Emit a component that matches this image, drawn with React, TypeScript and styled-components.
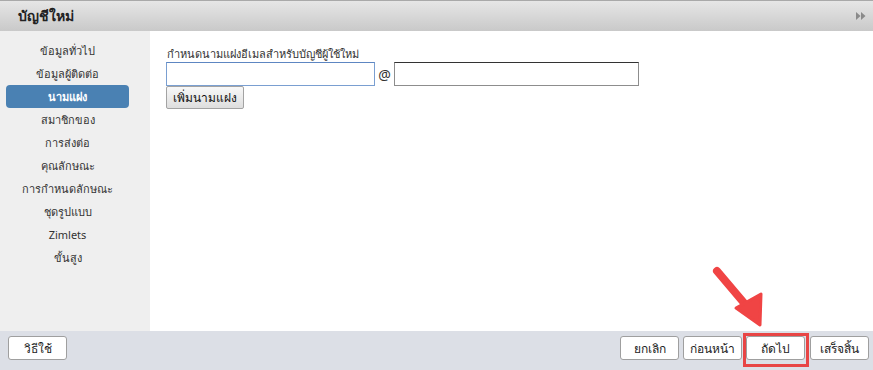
import React from "react";
import styled, { createGlobalStyle } from "styled-components";

const GlobalStyle = createGlobalStyle`
  html, body {
    margin: 0;
    padding: 0;
    background: #fff;
  }
  body {
    font-family: Tahoma, "Noto Sans", "DejaVu Sans", "Liberation Sans", sans-serif;
    font-size: 11px;
    color: #222;
  }
`;

const navItems = [
  "ข้อมูลทั่วไป",
  "ข้อมูลผู้ติดต่อ",
  "นามแฝง",
  "สมาชิกของ",
  "การส่งต่อ",
  "คุณลักษณะ",
  "การกำหนดลักษณะ",
  "ชุดรูปแบบ",
  "Zimlets",
  "ขั้นสูง",
];

export default function App() {
  const [active, setActive] = React.useState(2);

  return (
    <Dialog>
      <GlobalStyle />
      <TitleBar>
        <Title>บัญชีใหม่</Title>
        <svg width="10" height="8" viewBox="0 0 10 8">
          <path d="M0 0 L4.5 4 L0 8 Z M5 0 L9.5 4 L5 8 Z" fill="#8a8a8a" />
        </svg>
      </TitleBar>
      <Body>
        <Nav>
          {navItems.map((item, i) => (
            <NavItem key={item} $active={i === active} onClick={() => setActive(i)}>
              {item}
            </NavItem>
          ))}
        </Nav>
        <Content>
          <Label>กำหนดนามแฝงอีเมลสำหรับบัญชีผู้ใช้ใหม่</Label>
          <InputRow>
            <TextInput $width={209} $focused />
            <At>@</At>
            <TextInput $width={245} />
          </InputRow>
          <SmallButton>เพิ่มนามแฝง</SmallButton>
        </Content>
      </Body>
      <Footer>
        <FooterButton>วิธีใช้</FooterButton>
        <FooterRight>
          <FooterButton>ยกเลิก</FooterButton>
          <FooterButton>ก่อนหน้า</FooterButton>
          <Highlight>
            <FooterButton>ถัดไป</FooterButton>
          </Highlight>
          <FooterButton>เสร็จสิ้น</FooterButton>
        </FooterRight>
      </Footer>
      <Arrow width="70" height="70" viewBox="0 0 70 70">
        <path
          d="M7 7 L40 46"
          stroke="#f04444"
          strokeWidth="8"
          strokeLinecap="round"
        />
        <path
          d="M50 61 L26 44 L51 30 Z"
          fill="#f04444"
          stroke="#f04444"
          strokeWidth="3"
          strokeLinejoin="round"
        />
      </Arrow>
    </Dialog>
  );
}

const Dialog = styled.div`
  position: relative;
  width: 873px;
  height: 370px;
  display: flex;
  flex-direction: column;
  overflow: hidden;
`;

const TitleBar = styled.div`
  height: 30px;
  border-top: 1px solid #a9a9a9;
  background: linear-gradient(#e6e6e6, #c9c9c9);
  display: flex;
  align-items: center;
  justify-content: space-between;
  padding: 0 7px 0 18px;
  flex-shrink: 0;
`;

const Title = styled.div`
  font-weight: bold;
  font-size: 14px;
  color: #222;
`;

const Body = styled.div`
  flex: 1;
  display: flex;
  min-height: 0;
`;

const Nav = styled.div`
  width: 150px;
  background: #efefef;
  padding: 8px 21px 0 6px;
  box-sizing: border-box;
  display: flex;
  flex-direction: column;
  flex-shrink: 0;
`;

const NavItem = styled.div<{ $active?: boolean }>`
  height: 23px;
  line-height: 23px;
  text-align: center;
  border-radius: 4px;
  cursor: pointer;
  color: ${(p) => (p.$active ? "#fff" : "#333")};
  background: ${(p) => (p.$active ? "#4a81b3" : "transparent")};
  font-weight: ${(p) => (p.$active ? "bold" : "normal")};
  white-space: nowrap;
`;

const Content = styled.div`
  flex: 1;
  padding: 14px 16px;
  display: flex;
  flex-direction: column;
  align-items: flex-start;
`;

const Label = styled.div`
  color: #333;
  padding-left: 1px;
  height: 17px;
  line-height: 17px;
`;

const InputRow = styled.div`
  display: flex;
  align-items: center;
  gap: 3px;
`;

const TextInput = styled.input<{ $width: number; $focused?: boolean }>`
  width: ${(p) => p.$width}px;
  height: 24px;
  box-sizing: border-box;
  border: 1px solid ${(p) => (p.$focused ? "#7a9fd1" : "#8d8d8d")};
  border-top-color: ${(p) => (p.$focused ? "#5d86c2" : "#333")};
  margin: 0;
  padding: 2px 4px;
  font: inherit;
`;

const At = styled.span`
  font-size: 14px;
  color: #333;
  width: 13px;
  text-align: center;
`;

const SmallButton = styled.button`
  height: 23px;
  padding: 0 6px;
  font: inherit;
  font-size: 12px;
  color: #111;
  border: 1px solid #a3a3a3;
  border-radius: 2px;
  background: linear-gradient(#f8f8f8, #dedede);
`;

const Footer = styled.div`
  height: 39px;
  background: #dcdfe6;
  display: flex;
  align-items: flex-start;
  justify-content: space-between;
  padding: 5px 4px 0 8px;
  box-sizing: border-box;
  flex-shrink: 0;
`;

const FooterRight = styled.div`
  display: flex;
  align-items: flex-start;
  gap: 4px;
`;

const FooterButton = styled.button`
  width: 59px;
  height: 24px;
  box-sizing: border-box;
  background: #fff;
  border: 1px solid #9f9f9f;
  border-radius: 3px;
  font: inherit;
  font-size: 12px;
  color: #222;
  padding: 0;
`;

const Highlight = styled.div`
  display: flex;
  padding: 0 1px 4px 0;
  border: 3px solid #e84545;
  margin: -3px -3px -7px -3px;
`;

const Arrow = styled.svg`
  position: absolute;
  left: 710px;
  top: 264px;
`;
